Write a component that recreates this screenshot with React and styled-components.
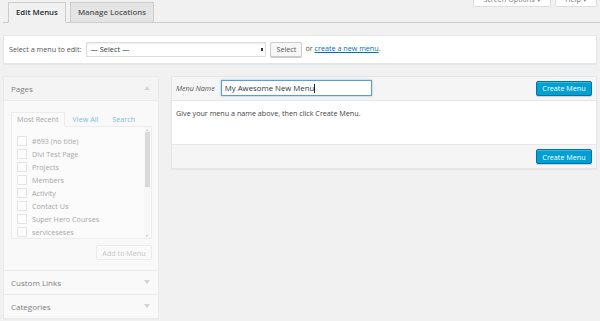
import React from 'react'
import styled, { createGlobalStyle } from 'styled-components'

const GlobalStyle = createGlobalStyle`
  html, body {
    margin: 0;
    padding: 0;
    background: #f1f1f1;
  }
  body {
    font-family: "Open Sans", "Noto Sans", sans-serif;
    font-size: 7.2px;
    color: #444;
  }
  * { box-sizing: border-box; }
`

const pages = [
  '#693 (no title)',
  'Divi Test Page',
  'Projects',
  'Members',
  'Activity',
  'Contact Us',
  'Super Hero Courses',
  'serviceseses',
]

const Caret = ({ up }) => (
  <svg width="6" height="4" viewBox="0 0 6 4">
    {up ? <path d="M0 4 L3 0 L6 4 Z" fill="#d4d4d4" /> : <path d="M0 0 L3 4 L6 0 Z" fill="#d4d4d4" />}
  </svg>
)

const App = () => {
  return (
    <Page>
      <GlobalStyle />
      <TabBar>
        <Tab active>Edit Menus</Tab>
        <Tab>Manage Locations</Tab>
        <ScreenLinks>
          <MetaButton wide>Screen Options ▾</MetaButton>
          <MetaButton>Help ▾</MetaButton>
        </ScreenLinks>
      </TabBar>

      <ManageBar>
        <label>Select a menu to edit:</label>
        <FakeSelect>
          <span>— Select —</span>
          <SelectArrow />
        </FakeSelect>
        <GreyButton>Select</GreyButton>
        <Aside>
          or <a href="#">create a new menu</a>.
        </Aside>
      </ManageBar>

      <Columns>
        <SideBox>
          <SectionTitle>
            <span>Pages</span>
            <Caret up />
          </SectionTitle>
          <SectionBody>
            <TabsRow>
              <SubTab active>Most Recent</SubTab>
              <SubTab>View All</SubTab>
              <SubTab>Search</SubTab>
            </TabsRow>
            <ListPanel>
              <ItemList>
                {pages.map((p) => (
                  <Item key={p}>
                    <Check />
                    <span>{p}</span>
                  </Item>
                ))}
              </ItemList>
              <ScrollTrack>
                <ScrollArrow>▴</ScrollArrow>
                <Thumb />
                <Spacer />
                <ScrollArrow>▾</ScrollArrow>
              </ScrollTrack>
            </ListPanel>
            <AddRow>
              <AddButton>Add to Menu</AddButton>
            </AddRow>
          </SectionBody>
          <SectionTitle bordered>
            <span>Custom Links</span>
            <Caret />
          </SectionTitle>
          <SectionTitle bordered>
            <span>Categories</span>
            <Caret />
          </SectionTitle>
        </SideBox>

        <MenuBox>
          <MenuHeader>
            <NameLabel>Menu Name</NameLabel>
            <NameField>
              My Awesome New Menu<TextCaret />
            </NameField>
            <PrimaryButton>Create Menu</PrimaryButton>
          </MenuHeader>
          <MenuBody>Give your menu a name above, then click Create Menu.</MenuBody>
          <MenuFooter>
            <PrimaryButton>Create Menu</PrimaryButton>
          </MenuFooter>
        </MenuBox>
      </Columns>
    </Page>
  )
}

const Page = styled.div`
  width: 600px;
  height: 321px;
  overflow: hidden;
`

const TabBar = styled.div`
  display: flex;
  align-items: flex-end;
  gap: 4px;
  height: 23px;
  margin-left: 3px;
  padding: 0 3px 0 5px;
  border-bottom: 1px solid #ccc;
`

const Tab = styled.div`
  height: 21px;
  margin-bottom: -1px;
  padding: 0 7px 1px;
  display: flex;
  align-items: center;
  font-size: 7.8px;
  font-weight: 600;
  border: 1px solid #ccc;
  border-bottom-color: ${(p) => (p.active ? '#f1f1f1' : '#ccc')};
  background: ${(p) => (p.active ? '#f1f1f1' : '#e4e4e4')};
  color: ${(p) => (p.active ? '#23282d' : '#555')};
`

const ScreenLinks = styled.div`
  margin-left: auto;
  align-self: flex-start;
  height: 7px;
  overflow: hidden;
  display: flex;
  align-items: flex-end;
  gap: 4px;
`

const MetaButton = styled.div`
  width: ${(p) => (p.wide ? '78px' : '42px')};
  height: 14px;
  background: #fff;
  border: 1px solid #ddd;
  border-top: none;
  border-radius: 0 0 2px 2px;
  color: #72777c;
  font-size: 7.2px;
  display: flex;
  align-items: flex-start;
  justify-content: center;
  padding-top: 1px;
`

const ManageBar = styled.div`
  margin: 12px 3px 0;
  height: 29px;
  background: #fff;
  border: 1px solid #e5e5e5;
  box-shadow: 0 1px 1px rgba(0, 0, 0, 0.04);
  display: flex;
  align-items: center;
  padding: 0 5px 1px;
  color: #555;

  label {
    margin-right: 5px;
  }
`

const FakeSelect = styled.div`
  width: 180px;
  height: 15px;
  border: 1px solid #ddd;
  background: #fff;
  box-shadow: inset 0 1px 2px rgba(0, 0, 0, 0.07);
  display: flex;
  align-items: center;
  justify-content: space-between;
  padding: 0 2px 0 3px;
  color: #32373c;
  font-size: 7.4px;
`

const SelectArrow = styled.span`
  width: 2px;
  height: 3px;
  background: #333;
`

const GreyButton = styled.div`
  margin-left: 4px;
  width: 32px;
  height: 15px;
  border: 1px solid #ccc;
  border-radius: 2px;
  background: #f7f7f7;
  box-shadow: 0 1px 0 #ccc;
  color: #555;
  display: flex;
  align-items: center;
  justify-content: center;
`

const Aside = styled.span`
  margin-left: 3px;
  margin-top: -2px;
  color: #555;

  a {
    color: #0073aa;
  }
`

const Columns = styled.div`
  display: flex;
  align-items: flex-start;
  gap: 12px;
  margin: 12px 3px 0;
`

const SideBox = styled.div`
  width: 156px;
  border: 1px solid #eaeaea;
  background: #f9f9f9;
  box-shadow: 0 1px 1px rgba(0, 0, 0, 0.02);
`

const SectionTitle = styled.div`
  height: 24px;
  display: flex;
  align-items: center;
  justify-content: space-between;
  padding: 0 8px 1px 7px;
  font-size: 8px;
  color: #7c7e80;
  background: ${(p) => (p.bordered ? '#f9f9f9' : '#f4f4f4')};
  border-top: ${(p) => (p.bordered ? '1px solid #eaeaea' : 'none')};
  border-bottom: ${(p) => (p.bordered ? 'none' : '1px solid #ececec')};
`

const SectionBody = styled.div`
  padding: 11px 6px 10px 7px;
`

const TabsRow = styled.div`
  display: flex;
  align-items: flex-end;
  gap: 2px;
`

const SubTab = styled.div`
  height: 15px;
  margin-bottom: -1px;
  padding: 0 5px 1px;
  display: flex;
  align-items: center;
  font-size: 7.2px;
  color: ${(p) => (p.active ? '#a5a5a5' : '#82bcd8')};
  background: ${(p) => (p.active ? '#fbfbfb' : 'transparent')};
  border: 1px solid ${(p) => (p.active ? '#ececec' : 'transparent')};
  border-bottom-color: ${(p) => (p.active ? '#fbfbfb' : 'transparent')};
  position: relative;
`

const ListPanel = styled.div`
  height: 113px;
  border: 1px solid #ececec;
  background: #fbfbfb;
  display: flex;
`

const ItemList = styled.div`
  flex: 1;
  padding: 7px 0 0 5px;
  overflow: hidden;
`

const Item = styled.div`
  height: 13px;
  display: flex;
  align-items: center;
  gap: 5px;
  color: #a7a7a7;
  font-size: 7.2px;
  white-space: nowrap;
`

const Check = styled.span`
  width: 10px;
  height: 10px;
  border: 1px solid #e4e4e4;
  background: #fdfdfd;
  flex: none;
`

const ScrollTrack = styled.div`
  width: 6px;
  margin-right: 1px;
  display: flex;
  flex-direction: column;
  align-items: center;
  background: #f7f7f7;
`

const ScrollArrow = styled.span`
  font-size: 4px;
  line-height: 5px;
  height: 5px;
  color: #c8c8c8;
`

const Thumb = styled.div`
  width: 5px;
  height: 55px;
  background: #d9d9d9;
`

const Spacer = styled.div`
  flex: 1;
`

const AddRow = styled.div`
  display: flex;
  justify-content: flex-end;
  margin-top: 6px;
`

const AddButton = styled.div`
  width: 56px;
  height: 15px;
  border: 1px solid #ececec;
  border-radius: 2px;
  background: #fafafa;
  color: #c3c5c7;
  font-size: 7.2px;
  display: flex;
  align-items: center;
  justify-content: center;
`

const MenuBox = styled.div`
  flex: 1;
  border: 1px solid #e5e5e5;
  box-shadow: 0 1px 1px rgba(0, 0, 0, 0.04);
  background: #fff;
`

const MenuHeader = styled.div`
  height: 24px;
  display: flex;
  align-items: center;
  padding: 0 4px 1px 4px;
  background: #f5f5f5;
  border-bottom: 1px solid #e6e6e6;
`

const NameLabel = styled.span`
  font-style: italic;
  color: #555;
  font-size: 7.2px;
  margin-right: 6px;
`

const NameField = styled.div`
  width: 151px;
  height: 16px;
  border: 1px solid #5b9dd9;
  box-shadow: 0 0 2px rgba(30, 140, 190, 0.5);
  background: #fff;
  display: flex;
  align-items: center;
  padding: 0 3px;
  color: #32373c;
  font-size: 7.8px;
`

const TextCaret = styled.span`
  width: 1px;
  height: 9px;
  background: #222;
`

const PrimaryButton = styled.div`
  margin-left: auto;
  width: 56px;
  height: 15px;
  border: 1px solid #0073aa;
  border-radius: 2px;
  background: #00a0d2;
  box-shadow: inset 0 1px 0 rgba(120, 200, 230, 0.5), 0 1px 0 rgba(0, 0, 0, 0.15);
  color: #fff;
  font-size: 7.2px;
  display: flex;
  align-items: center;
  justify-content: center;
`

const MenuBody = styled.div`
  height: 43px;
  padding: 7px 4px;
  color: #444;
  font-size: 7.2px;
`

const MenuFooter = styled.div`
  height: 24px;
  display: flex;
  align-items: center;
  padding: 0 4px;
  background: #f5f5f5;
  border-top: 1px solid #e6e6e6;
`

export default App
